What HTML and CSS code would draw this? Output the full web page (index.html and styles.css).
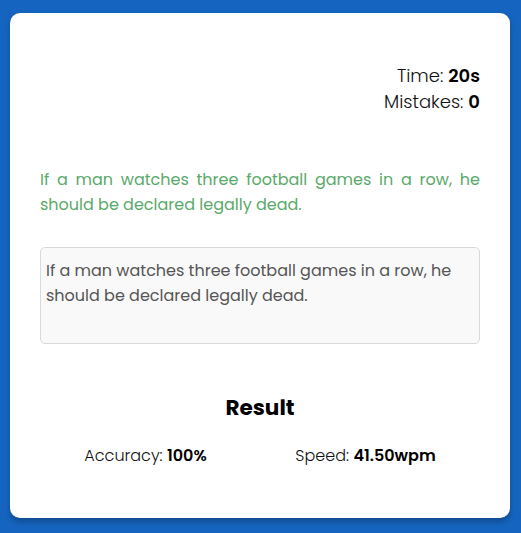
FILE: index.html
```html
<!DOCTYPE html>
<html>
<head>
<meta charset="utf-8">
<link rel="stylesheet" href="styles.css">
</head>
<body>
<div class="card">
  <div class="stats">
    <div>Time: <b>20s</b></div>
    <div>Mistakes: <b>0</b></div>
  </div>
  <p class="quote">If a man watches three football games in a row, he should be declared legally dead.</p>
  <div class="input">If a man watches three football games in a row, he should be declared legally dead.</div>
  <h2 class="result-title">Result</h2>
  <div class="result-row">
    <div>Accuracy: <b>100%</b></div>
    <div>Speed: <b>41.50wpm</b></div>
  </div>
</div>
</body>
</html>
```
FILE: styles.css
```css
html, body { margin: 0; padding: 0; }
body {
  background: #1565c0;
  font-family: "Poppins", "Open Sans", "Noto Sans", sans-serif;
  height: 533px;
  overflow: hidden;
}
.card {
  margin: 13px 0 0 10px;
  width: 500px;
  height: 505px;
  box-sizing: border-box;
  background: #fff;
  border-radius: 10px;
  box-shadow: 0 4px 6px rgba(0, 0, 0, 0.25);
  padding: 50px 30px 30px;
}
.stats {
  text-align: right;
  font-size: 18px;
  line-height: 26px;
  font-weight: 300;
  color: #111;
}
.stats b, .result-row b { font-weight: 600; color: #000; }
.quote {
  margin: 52px 0 0;
  color: #5aa96a;
  font-size: 16px;
  line-height: 25px;
  text-align: justify;
}
.input {
  margin-top: 30px;
  height: 97px;
  box-sizing: border-box;
  border: 1px solid #d9d9d9;
  border-radius: 5px;
  background: #f9f9f9;
  padding: 10px 5px;
  color: #555;
  font-size: 16px;
  line-height: 25px;
}
.result-title {
  margin: 49px 0 0;
  text-align: center;
  font-size: 21.6px;
  line-height: 30px;
  font-weight: 700;
  color: #000;
}
.result-row {
  margin-top: 21px;
  display: flex;
  justify-content: space-around;
  font-size: 16px;
  line-height: 24px;
  font-weight: 300;
  color: #111;
}
```
